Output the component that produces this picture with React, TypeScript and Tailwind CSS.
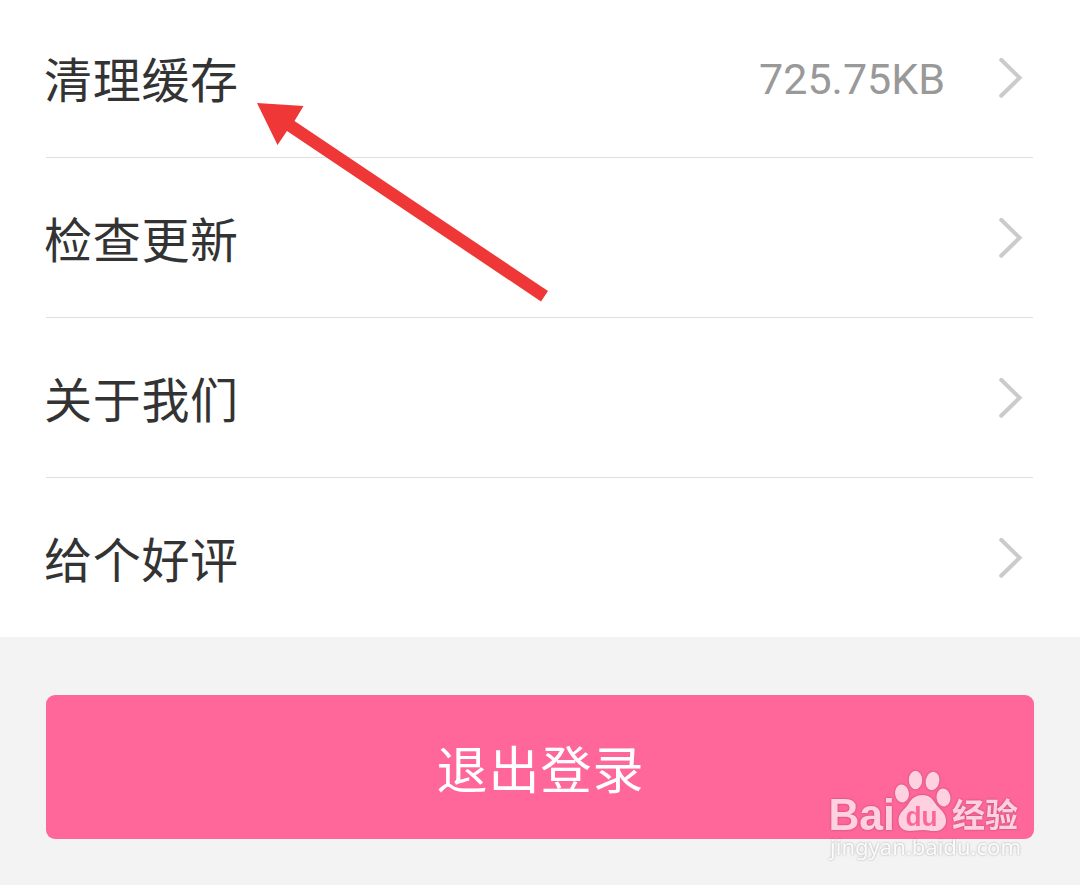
interface SettingRow {
  label: string;
  value?: string;
}

const rows: SettingRow[] = [
  { label: '清理缓存', value: '725.75KB' },
  { label: '检查更新' },
  { label: '关于我们' },
  { label: '给个好评' },
];

function Chevron() {
  return (
    <svg width="26" height="42" viewBox="0 0 26 42" fill="none" className="shrink-0">
      <path d="M3.2 2.8 L21.6 20.8 L3.2 38.8" stroke="#cbcbcb" strokeWidth="4" strokeLinecap="round" strokeLinejoin="miter" />
    </svg>
  );
}

function Row({ label, value }: SettingRow) {
  return (
    <div className="flex h-40 shrink-0 items-center border-b border-[#dedede] pr-[9px] last:h-[159px] last:border-b-0">
      <span className="-ml-[2px] pt-2 text-[48px] leading-none tracking-[0.7px] text-[#333333]">{label}</span>
      <div className="ml-auto flex items-center gap-[53px]">
        {value && <span className="pt-1 text-[43px] leading-none text-[#999999]">{value}</span>}
        <Chevron />
      </div>
    </div>
  );
}

function Arrow() {
  return (
    <svg className="absolute top-[90px] left-[240px]" width="320" height="220" viewBox="0 0 320 220">
      <path d="M17 13 L63.5 16 L54.5 31 L308 201 L301 211.5 L47 41 L37.5 55 Z" fill="#ef3737" />
    </svg>
  );
}

function Watermark() {
  return (
    <svg
      className="absolute top-[760px] left-[820px] drop-shadow-[0_0_1px_rgba(0,0,0,0.3)]"
      width="220"
      height="110"
      viewBox="0 0 220 110"
    >
      <g fill="#ffd0e0">
        <text x="8.5" y="69.5" textLength="66.5" lengthAdjust="spacingAndGlyphs" fontSize="44" fontWeight="700" fontFamily="Liberation Sans, sans-serif">
          Bai
        </text>
        <ellipse cx="82" cy="33.5" rx="7" ry="9" transform="rotate(-8 82 33.5)" />
        <ellipse cx="95.5" cy="20" rx="6.7" ry="9.3" />
        <ellipse cx="112.5" cy="21" rx="6.8" ry="9.3" transform="rotate(12 112.5 21)" />
        <ellipse cx="123.5" cy="37.5" rx="7" ry="9" transform="rotate(-8 123.5 37.5)" />
        <path d="M102.5 35 C96 35 92 38 89 43 C85 50 78.5 52 78.5 60.5 C78.5 67 83 71 90 71 C95 71 98 70 103 70 C108 70 111 71.5 116 71 C122 70.5 126.5 66 126 60 C125.5 52 119 49 115 43 C112 38 109 35 102.5 35 Z" />
        <text x="132" y="67" textLength="66" lengthAdjust="spacingAndGlyphs" fontSize="33" fontWeight="700" fontFamily="Noto Sans CJK SC, sans-serif">
          经验
        </text>
      </g>
      <text x="85.5" y="65.5" textLength="32" lengthAdjust="spacingAndGlyphs" fill="#fb6798" fontSize="28" fontWeight="700" fontFamily="Liberation Sans, sans-serif">
        du
      </text>
      <text x="10" y="95" textLength="191" lengthAdjust="spacingAndGlyphs" fill="#fbfbfb" fontSize="22.5" fontFamily="Noto Sans, sans-serif">
        jingyan.baidu.com
      </text>
    </svg>
  );
}

export default function App() {
  return (
    <div className="relative flex h-[885px] w-[1080px] flex-col overflow-hidden bg-[#f3f3f3] font-[Roboto,'Noto_Sans_CJK_SC',sans-serif]">
      <div className="flex h-[637px] flex-col justify-end overflow-hidden bg-white pr-[47px] pl-[46px]">
        {rows.map((row) => (
          <Row key={row.label} {...row} />
        ))}
      </div>
      <div className="flex px-[46px] pt-[58px]">
        <button className="flex h-36 flex-1 items-center justify-center rounded-[9px] bg-[#ff6699] pt-2 pl-px text-[51px] leading-none tracking-[1px] text-white">
          退出登录
        </button>
      </div>
      <Arrow />
      <Watermark />
    </div>
  );
}
